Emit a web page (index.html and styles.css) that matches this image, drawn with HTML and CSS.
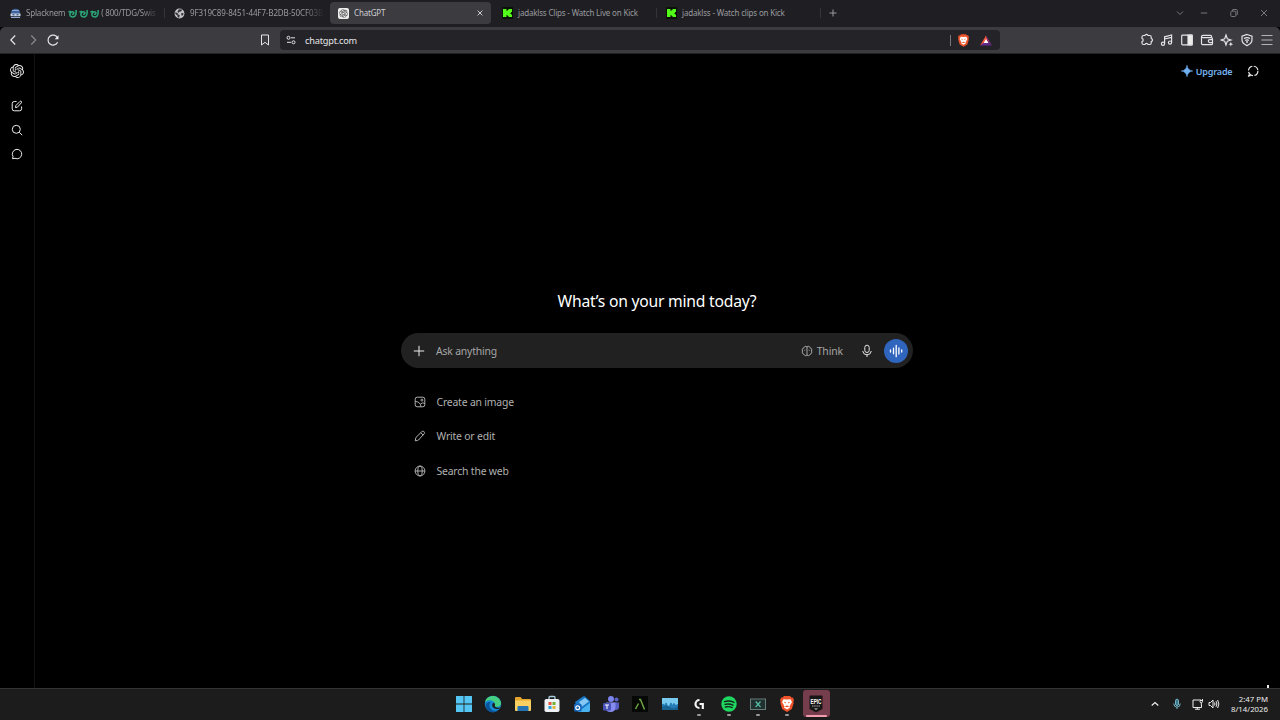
FILE: index.html
```html
<!DOCTYPE html>
<html lang="en">
<head>
    <meta charset="UTF-8">
    <title>ChatGPT</title>
    <link rel="stylesheet" href="styles.css">
</head>
<body>
    <svg class="defs" width="0" height="0">
        <symbol id="knot" viewBox="0 0 24 24"><path fill="currentColor" d="M22.2819 9.8211a5.9847 5.9847 0 0 0-.5157-4.9108 6.0462 6.0462 0 0 0-6.5098-2.9A6.0651 6.0651 0 0 0 4.9807 4.1818a5.9847 5.9847 0 0 0-3.9977 2.9 6.0462 6.0462 0 0 0 .7427 7.0966 5.98 5.98 0 0 0 .511 4.9107 6.051 6.051 0 0 0 6.5146 2.9001A5.9847 5.9847 0 0 0 13.2599 24a6.0557 6.0557 0 0 0 5.7718-4.2058 5.9894 5.9894 0 0 0 3.9977-2.9001 6.0557 6.0557 0 0 0-.7475-7.0729zm-9.022 12.6081a4.4755 4.4755 0 0 1-2.8764-1.0408l.1419-.0804 4.7783-2.7582a.7948.7948 0 0 0 .3927-.6813v-6.7369l2.02 1.1686a.071.071 0 0 1 .038.0522v5.5826a4.504 4.504 0 0 1-4.4945 4.4944zm-9.6607-4.1254a4.4708 4.4708 0 0 1-.5346-3.0137l.142.0852 4.783 2.7582a.7712.7712 0 0 0 .7806 0l5.8428-3.3685v2.3324a.0804.0804 0 0 1-.0332.0615L9.74 19.9502a4.4992 4.4992 0 0 1-6.1408-1.6464zM2.3408 7.8956a4.485 4.485 0 0 1 2.3655-1.9728V11.6a.7664.7664 0 0 0 .3879.6765l5.8144 3.3543-2.0201 1.1685a.0757.0757 0 0 1-.071 0l-4.8303-2.7865A4.504 4.504 0 0 1 2.3408 7.872zm16.5963 3.8558L13.1038 8.364 15.1192 7.2a.0757.0757 0 0 1 .071 0l4.8303 2.7913a4.4944 4.4944 0 0 1-.6765 8.1042v-5.6772a.79.79 0 0 0-.407-.667zm2.0107-3.0231l-.142-.0852-4.7735-2.7818a.7759.7759 0 0 0-.7854 0L9.409 9.2297V6.8974a.0662.0662 0 0 1 .0284-.0615l4.8303-2.7866a4.4992 4.4992 0 0 1 6.6802 4.66zM8.3065 12.863l-2.02-1.1638a.0804.0804 0 0 1-.038-.0567V6.0742a4.4992 4.4992 0 0 1 7.3757-3.4537l-.142.0805L8.704 5.459a.7948.7948 0 0 0-.3927.6813zm1.0976-2.3654l2.602-1.4998 2.6069 1.4998v2.9994l-2.5974 1.4997-2.6067-1.4997Z"/></symbol>
        <symbol id="kick" viewBox="0 0 11 12"><rect width="11" height="12" fill="#0a1207"/><path fill="#53fc18" d="M1 2h3.500v2h1V3h1V2H10v3H9v1H8v.5h1v1h1V10H6.500V9h-1V8h-1v2H1z"/></symbol>
        <symbol id="brave" viewBox="0 0 14 16"><path fill="#f0532a" d="M4 0h6l1.500 1.500 1.300-.1L14 4l-.6 1.500.3 1.500-1.900 6L7 16l-4.800-3L.3 7l.3-1.500L0 4l1.200-2.600 1.300.1z"/><path fill="#fff" d="M3.500 3.300 7 3.600l3.500-.3L12 6l-1.500 2.500-.9 1.900.4 1.100L7 13.500 4 11.500l.4-1.100-.9-1.900L2 6z"/><path fill="#f0532a" d="m3.800 5.800 2.200.4-.6 1.300zM10.200 5.800 8 6.200l.6 1.300zM4.300 10.300 7 9.600l2.700.7-2.700 1z"/></symbol>
        <symbol id="dragon" viewBox="0 0 10 10"><path fill="none" stroke="#2ba778" stroke-width="1.7" d="M.5 3.500 3 2.500M9 1v3.500C9 8 6.500 9.200 4.200 8.700S1.500 5.500 3 4s4-.8 3.500.8-2 1-2 1"/></symbol>
    </svg>

    <div class="tabs">
        <div class="tab">
            <svg class="favicon" viewBox="0 0 11 11"><ellipse cx="5.5" cy="4.5" rx="4.5" ry="3.8" fill="#40639f"/><path d="M2 2.500h7M1 9.500h9" stroke="#8ba9d6"/><path d="M.5 5.500h10v2.700H.5z" fill="#c4d1e5"/><path d="M2.500 6.800h2M6.500 6.800h2" stroke="#26385e"/></svg>
            <span class="title fade">Splacknem <svg class="emoji"><use href="#dragon"/></svg><svg class="emoji"><use href="#dragon"/></svg><svg class="emoji"><use href="#dragon"/></svg>( 800/TDG/Swis</span>
        </div>
        <div class="tab plain">
            <svg class="favicon" viewBox="0 0 11 11"><circle cx="5.5" cy="5.5" r="4.9" fill="#c4c4c8"/><path fill="#333338" d="M1.200 4.200 3.800 5v1.200l2 1-.6 2.500-1.500-.5-.3-1.600-2-1.500zM5 1.200l3 .3-.5 1.800-2 .4-.9 1.300L3.500 3.500zM7 5.300l2.500-.2-.3 2-1.400 1z"/></svg>
            <span class="title hash fade">9F319C89-8451-44F7-B2DB-50CF03B</span>
        </div>
        <div class="tab active">
            <svg class="favicon gpt" viewBox="0 0 11 11"><rect width="11" height="11" rx="2" fill="#eee"/><use href="#knot" x="1.2" y="1.2" width="8.6" height="8.6"/></svg>
            <span class="title">ChatGPT</span>
            <svg class="close" viewBox="0 0 6 6"><path d="m.6.600 4.800 4.800m0-4.800L.6 5.400"/></svg>
        </div>
        <div class="tab">
            <svg class="favicon kick"><use href="#kick"/></svg>
            <span class="title">jadaklss Clips - Watch Live on Kick</span>
        </div>
        <div class="tab">
            <svg class="favicon kick"><use href="#kick"/></svg>
            <span class="title">jadaklss - Watch clips on Kick</span>
        </div>
        <svg class="new-tab" viewBox="0 0 8 8"><path d="M4 .5v7M.5 4h7"/></svg>
        <div class="window-buttons">
            <svg viewBox="0 0 10 10"><path d="m2 3.500 3 3 3-3"/></svg>
            <svg viewBox="0 0 10 10"><path d="M1.800 5h6.400"/></svg>
            <svg viewBox="0 0 10 10"><rect x="1.8" y="3.2" width="5" height="5.3" rx="1"/><path d="M3.500 3V2q0-.5.5-.5h3.300q1 0 1 1v3.800q0 .7-.8.7"/></svg>
            <svg viewBox="0 0 10 10"><path d="m2 2 6 6m0-6L2 8"/></svg>
        </div>
    </div>

    <div class="toolbar">
        <div class="nav">
            <svg viewBox="0 0 14 14"><path d="M9.200 2.500 4.800 7l4.400 4.500"/></svg>
            <svg class="dim" viewBox="0 0 14 14"><path d="M5.300 2.500 9.700 7l-4.400 4.500"/></svg>
            <svg viewBox="0 0 14 14"><path d="M11.600 9.200A5 5 0 1 1 11.500 4.800"/><path d="M12.500 2.300v4H8.700z" fill="#eee" stroke="none"/></svg>
        </div>
        <svg class="bookmark" viewBox="0 0 12 14"><path d="M2.500 2h7v10L6 9.300 2.500 12z"/></svg>
        <div class="address">
            <svg class="site" viewBox="0 0 10 10"><circle cx="2.5" cy="2.8" r="1.5"/><path d="M5 2.800h4M1 7.300h4"/><circle cx="7.500" cy="7.300" r="1.5"/></svg>
            <span class="url">chatgpt.com</span>
            <span class="bar"></span>
            <svg class="shield"><use href="#brave"/></svg>
            <svg class="bat" viewBox="0 0 12 11"><path d="M6 .5 8 7 0 10.500z" fill="#f0523a"/><path d="M6 .5 12 10.500 8 7z" fill="#8a2d87"/><path d="M0 10.500 4 7.500h4l4 3z" fill="#612a8f"/><path d="m6 4 2.400 4H3.600z" fill="#fff"/></svg>
        </div>
        <div class="extensions">
            <svg viewBox="0 0 14 14"><path d="M3.500 2.500h1.400c.5-1.500 2.700-1.500 3.200 0h1.600q1.500 0 1.500 1.500v1.400c1.700.5 1.700 2.700 0 3.200V10q0 1.500-1.500 1.500H8.100c-.5-1.500-2.700-1.500-3.200 0H3.500Q2 11.500 2 10V8.600c1.600-.5 1.600-2.700 0-3.200V4q0-1.500 1.500-1.500z"/></svg>
            <svg viewBox="0 0 14 14"><circle cx="3" cy="10.8" r="1.6"/><circle cx="10" cy="9.6" r="1.6"/><path d="M4.600 10.800v-7l7-1.800v7.600M4.600 6l7-1.700"/></svg>
            <svg viewBox="0 0 14 14"><rect x="1.7" y="2.2" width="10.6" height="9.6" rx=".8"/><path d="M8 2.200h4v9.600H8z" fill="#eee"/></svg>
            <svg viewBox="0 0 14 14"><path d="M11.500 4.500V3.300q0-1-1-1H3q-1.500 0-1.500 1.200T3 4.700h8.200q1.300 0 1.300 1.200v4.500q0 1.300-1.300 1.300H3.300q-1.800 0-1.800-1.500V3.500M12.500 6.600H9.800a1.500 1.500 0 0 0 0 3h2.700"/></svg>
            <svg viewBox="0 0 14 14"><path d="M6 2 7.300 5.700 11 7 7.300 8.300 6 12 4.700 8.300 1 7l3.700-1.300z"/><path d="m10.800 8.800.7 1.700 1.700.7-1.700.6-.7 1.700-.6-1.700-1.700-.6 1.700-.7z" fill="#eee" stroke="none"/></svg>
            <svg viewBox="0 0 14 14"><path d="m7 1.500 5 1.700v3.600Q12 10.500 7 12.600 2 10.500 2 6.800V3.200z"/><path d="M4 5.600q3-2 6 0M5.200 7.400q1.800-1.200 3.600 0"/><circle cx="7" cy="9" r=".4"/></svg>
            <svg class="menu" viewBox="0 0 14 14"><path d="M1.500 2.500h11M1.500 7h11M1.500 11.500h11"/></svg>
        </div>
    </div>

    <div class="page">
        <div class="sidebar">
            <svg class="logo"><use href="#knot"/></svg>
            <svg class="item" viewBox="0 0 12 12"><path d="M5.500 1.500H3.300Q1.200 1.500 1.200 3.600v5.200q0 2 2.100 2h5.200q2.100 0 2.100-2V6.500M4.500 7.600l.3-2L9 1.400q.7-.6 1.300 0t0 1.500L6.400 7.200z"/></svg>
            <svg class="item" viewBox="0 0 12 12"><circle cx="5.3" cy="5.3" r="4"/><path d="m8.300 8.300 2.900 2.900"/></svg>
            <svg class="item" viewBox="0 0 12 12"><path d="M1.500 10.700 2 8.500A4.700 4.700 0 1 1 4 10.300z"/></svg>
        </div>
        <div class="main">
            <div class="header">
                <svg class="spark" viewBox="0 0 12 12"><path d="M6 .2Q6.700 5.300 11.800 6 6.700 6.700 6 11.800 5.300 6.700.2 6 5.300 5.300 6 .2z" stroke="#6fb0f3"/></svg>
                <span class="upgrade">Upgrade</span>
                <svg class="temp" viewBox="0 0 12 12"><path d="M2.200 9.500 1.700 11l2-.6" /><circle cx="6.2" cy="5.9" r="4.7" stroke-dasharray="5.9 1.5"/></svg>
            </div>
            <div class="content">
                <h1>What’s on your mind today?</h1>
                <div class="composer">
                    <svg class="plus" viewBox="0 0 12 12"><path d="M6 .8v10.400M.8 6h10.400"/></svg>
                    <span class="placeholder">Ask anything</span>
                    <svg class="brain" viewBox="0 0 12 12"><path d="M6 1.700v8.600M6 2C4.800.7 3.200 1.300 3 2.700 1.300 3.200.8 4.600 1.500 6 .8 7.500 1.500 9 3 9.300 3.400 10.800 5 11.200 6 10c1 1.200 2.600.8 3-.7 1.500-.3 2.200-1.800 1.500-3.300.7-1.400.2-2.800-1.500-3.300C8.800 1.300 7.200.7 6 2zM3.900 4.700l-.3 1M8.100 4.700l.3 1"/></svg>
                    <span class="think">Think</span>
                    <svg class="mic" viewBox="0 0 12 14"><rect x="3.8" y="1.2" width="4.4" height="7.3" rx="2.2"/><path d="M1.700 7q.5 3.800 4.300 3.800T10.300 7M6 10.800v2.200"/></svg>
                    <div class="voice"><svg viewBox="0 0 14 14"><path d="M1.500 6v2M4.500 4.200v5.600M7.200 1.300v11.400M9.900 4v6M12.700 6v2"/></svg></div>
                </div>
                <div class="suggestion">
                    <svg viewBox="0 0 12 12"><rect x="1.2" y="1.2" width="9.6" height="9.6" rx="2"/><circle cx="7.9" cy="4.1" r="1"/><path d="M1.300 5.500q5 0 5.700 5.200M6.500 8q2-2 4.200-.6"/></svg>
                    <span>Create an image</span>
                </div>
                <div class="suggestion">
                    <svg viewBox="0 0 12 12"><path d="m1.200 10.800.7-3.300 5.900-5.800q1-1 2-.3t.5 2.200L4.500 10q-.8.600-3.300.8zM6.800 2.700l2.500 2.500"/></svg>
                    <span>Write or edit</span>
                </div>
                <div class="suggestion">
                    <svg viewBox="0 0 12 12"><circle cx="6" cy="6" r="4.9"/><ellipse cx="6" cy="6" rx="2.2" ry="4.9"/><path d="M1.100 6h9.800"/></svg>
                    <span>Search the web</span>
                </div>
            </div>
            <span class="speck"></span>
        </div>
    </div>

    <div class="taskbar">
        <div class="apps">
            <div class="app"><svg viewBox="0 0 18 18"><path fill="#55c5f3" d="M1 1h7.600v7.600H1zM9.400 1H17v7.600H9.400zM1 9.400h7.600V17H1zM9.400 9.400H17V17H9.400z"/></svg></div>
            <div class="app"><svg viewBox="0 0 18 18"><circle cx="9" cy="9" r="8.2" fill="#168bd3"/><path fill="#45cf80" d="M1 7C2.500-1 15-1.500 17 7.500c.5 3-1.700 4.700-5 4.300-2-.2-1.500-1-1-2C11 5 4.500 4 1 7z"/><path fill="#0b559c" d="M6 8c-2 5 2.500 9 8 7.300C8.500 20 1.500 16 1.700 10 2 7.500 4.500 6.500 7 7z"/><path fill="#1d2020" d="M9.500 7.700c3 1.300.3 3 2 4.300 1.500 1.200 3.800.8 5 .2-2 3-7 2-8-.7-.7-2-.3-3 1-3.800z"/></svg></div>
            <div class="app"><svg viewBox="0 0 18 18"><path d="M1 3q0-1 1-1h4.500l1.700 2H16q1 0 1 1v4H1z" fill="#e6a52d"/><path d="M1 5.500h16V15q0 1-1 1H2q-1 0-1-1z" fill="#f8cf60"/><path d="M4.500 11h9q1 0 1 1v4h-11v-4q0-1 1-1z" fill="#2474b5"/></svg></div>
            <div class="app"><svg viewBox="0 0 18 18"><path d="M6 5V2.500q0-1 1-1h4q1 0 1 1V5" fill="none" stroke="#a8cddd" stroke-width="1.3"/><rect x="1.5" y="4" width="15" height="13" rx="1.8" fill="#eff2f4"/><path d="M5.500 7h3v3h-3z" fill="#e75435"/><path d="M9.500 7h3v3h-3z" fill="#72af32"/><path d="M5.500 11h3v3h-3z" fill="#2ca0db"/><path d="M9.500 11h3v3h-3z" fill="#e3b33c"/></svg></div>
            <div class="app"><svg viewBox="0 0 18 18"><path d="m2 7 8-5.500q1-.5 2 0L17 6v9q0 2-2 2H5z" fill="#1979c8"/><path d="m6 7 6-4 4 3.500-7 5z" fill="#86c8f3"/><path d="m5 17 12-9v7q0 2-2 2z" fill="#49b2ef"/><rect x="1" y="9" width="7.5" height="7.5" rx="1" fill="#1465b8"/><circle cx="4.7" cy="12.7" r="1.9" fill="none" stroke="#fff" stroke-width="1.2"/></svg></div>
            <div class="app"><svg viewBox="0 0 18 18"><circle cx="9" cy="4" r="3" fill="#7b83ed"/><circle cx="14.5" cy="4.5" r="2" fill="#5a62c3"/><path d="M11 7.500h6V12q0 3-3 3h-3z" fill="#575ec2"/><path d="M4 7.500h9.500V12q0 5-5 5T4 13z" fill="#868cef"/><rect x="1" y="8" width="8" height="7.5" rx="1" fill="#4851b6"/><path d="M3 10h4M5 10v4" stroke="#fff"/></svg></div>
            <div class="app"><svg viewBox="0 0 18 18"><rect x="1" y="1" width="16" height="16" fill="#050805"/><path d="m4.500 14 3-5.500M8 4.500h1.500l4 10" stroke="#6ea642" stroke-width="1.5" fill="none"/></svg></div>
            <div class="app"><svg viewBox="0 0 18 18"><rect x="1" y="3" width="16" height="12" fill="#78caee"/><path d="M1 9q1.500-1 2.500 1 1.500-5 3 0 1 2 2 0 1.500-5 3 0 1.500-4 3 0L17 9v6H1z" fill="#247db5"/><path d="M1 12q4-3 8 0t8-1v4H1z" fill="#176394"/></svg></div>
            <div class="app running"><svg viewBox="0 0 18 18"><path d="M9.500 5A4 4 0 1 0 9.500 13M9.500 9h3.300v5" stroke="#f5f5f5" stroke-width="2.2" fill="none"/></svg></div>
            <div class="app running"><svg viewBox="0 0 18 18"><circle cx="9" cy="9" r="7.7" fill="#1ed760"/><path d="M4.500 6.600q5-1.500 9.500.8M5 9.400q4.200-1.200 8 .8M5.400 12q3.500-1 6.800.6" stroke="#14251a" stroke-width="1.4" stroke-linecap="round" fill="none"/></svg></div>
            <div class="app running"><svg viewBox="0 0 18 18"><rect x="1.5" y="4" width="15" height="10.5" fill="#20302e" stroke="#667d79"/><path d="m6.700 6.500 4.800 5.500m0-5.500L6.700 12" stroke="#55bca4" stroke-width="1.2"/></svg></div>
            <div class="app running"><svg viewBox="-2 -1 18 18"><use href="#brave" width="14" height="16"/></svg></div>
            <div class="app current"><svg viewBox="0 0 18 18"><path d="M2.500 1.500q0-1 1-1h11q1 0 1 1V14L9 17.500 2.500 14z" fill="#171717"/><text x="9" y="8.800" class="epic" textLength="11" lengthAdjust="spacingAndGlyphs">EPIC</text><path d="M5 11h8" stroke="#aaa" stroke-dasharray="1.5 .7"/><path d="M7 13.600h4L9 14.800z" fill="#ddd"/></svg></div>
        </div>
        <div class="tray">
            <svg class="up" viewBox="0 0 10 10"><path d="m1.700 6.500 3.300-3 3.300 3"/></svg>
            <svg class="tray-mic" viewBox="0 0 10 12"><rect x="3.5" y="1.2" width="3" height="6.3" rx="1.5" fill="#38768a"/><path d="M1.700 5.500q.2 3.700 3.300 3.700t3.300-3.700M5 9.200V11"/></svg>
            <svg class="network" viewBox="0 0 12 12"><path d="M7 2H1v7.500h8.500V7M3 11.200h5M5.300 9.500v1.700M8 1v2.700q0 1 1.200 1t1.300-1V1M8 2.500h2.500M9.300 5v2"/></svg>
            <svg class="sound" viewBox="0 0 12 12"><path d="M1 4.500h1.500L5 2v8L2.500 7.500H1zM6.500 4.500q1 1.500 0 3M8 3.200q1.800 2.800 0 5.600M9.600 2q2.600 4 0 8"/></svg>
            <div class="clock">2:47 PM<br><span>8/14/2026</span></div>
        </div>
    </div>
</body>
</html>
```
FILE: styles.css
```css
* {
    box-sizing: border-box;
    margin: 0;
    padding: 0;
}

body {
    width: 1280px;
    height: 720px;
    display: flex;
    flex-direction: column;
    overflow: hidden;
    background: #000;
    color: #ececec;
    font-family: "Noto Sans", "Open Sans", sans-serif;
}

svg {
    display: block;
    flex: none;
    fill: none;
    stroke: currentColor;
}

use {
    stroke: none;
}

.defs {
    display: none;
}

/* tab strip */
.tabs {
    height: 27px;
    flex: none;
    display: flex;
    align-items: center;
    padding: 0 0 1px 2px;
    background: #1f1f23;
    color: #9a9a9f;
}

.tab {
    width: 164px;
    height: 22px;
    flex: none;
    display: flex;
    align-items: center;
    padding-left: 8px;
    background: linear-gradient(#34343a, #34343a) right 1px center / 1px 10px no-repeat;
}

.plain {
    background: none;
}

.tab.active {
    width: 161px;
    margin-right: 3px;
    border-radius: 4px;
    background: #3b3b40;
    color: #cfcfd3;
}

.favicon {
    width: 11px;
    height: 11px;
    margin-right: 5px;
    stroke: none;
}

.gpt {
    color: #333;
}

.kick {
    height: 12px;
}

.title {
    height: 14px;
    line-height: 14px;
    font-size: 8px;
    letter-spacing: -.18px;
    white-space: nowrap;
}

.hash {
    letter-spacing: -.12px;
}

.fade {
    width: 134px;
    mask-image: linear-gradient(90deg, #000 86%, transparent);
}

.emoji {
    display: inline-block;
    width: 9px;
    height: 9px;
    margin: 0 2px 0 0;
    vertical-align: -2px;
}

.emoji:first-child {
    margin-left: 1px;
}

.close {
    width: 6px;
    height: 6px;
    margin-left: auto;
    margin-right: 8px;
}

.new-tab {
    width: 8px;
    height: 8px;
    margin-left: 7px;
}

.window-buttons {
    display: flex;
    margin-left: auto;
    padding-right: 11px;
    color: #77777c;
}

.window-buttons svg {
    width: 10px;
    height: 10px;
    margin-left: 20px;
}

.window-buttons svg:nth-child(2) {
    margin-left: 14px;
}

/* toolbar */
.toolbar {
    height: 27px;
    flex: none;
    display: flex;
    align-items: center;
    background: #3b3b40;
    border-bottom: 1px solid #222225;
    border-radius: 5px 5px 0 0;
    color: #e4e4e7;
}

.nav {
    display: flex;
    gap: 6px;
    margin-left: 6px;
}

.nav svg,
.extensions svg {
    width: 14px;
    height: 14px;
    stroke-width: 1.2;
}

.nav .dim {
    color: #88888d;
}

.extensions .menu {
    color: #b4b4b8;
}

.bookmark {
    width: 12px;
    height: 14px;
    margin-left: 198.5px;
}

.address {
    width: 720px;
    height: 20px;
    display: flex;
    align-items: center;
    margin-left: 9.5px;
    padding-left: 6px;
    border-radius: 4px;
    background: #242428;
}

.site {
    width: 10px;
    height: 10px;
}

.url {
    margin-left: 9px;
    font-size: 9.2px;
    letter-spacing: -.2px;
}

.bar {
    width: 1px;
    height: 11px;
    margin-left: auto;
    background: #77777c;
}

.shield {
    width: 11px;
    height: 13px;
    margin-left: 7px;
}

.bat {
    width: 12px;
    height: 11px;
    margin: 0 8px 0 11px;
    stroke: none;
}

.extensions {
    display: flex;
    gap: 6px;
    margin-left: auto;
    padding-right: 6px;
}

/* page */
.page {
    flex: 1;
    display: flex;
}

.sidebar {
    width: 35px;
    display: flex;
    flex-direction: column;
    align-items: center;
    padding-top: 10px;
    border-right: 1px solid #131313;
}

.logo {
    width: 14px;
    height: 14px;
    margin-bottom: 22px;
}

.item {
    width: 12px;
    height: 12px;
    margin-bottom: 12px;
}

.main {
    position: relative;
    flex: 1;
    display: flex;
    flex-direction: column;
}

.header {
    height: 34px;
    display: flex;
    align-items: center;
    justify-content: flex-end;
    padding-right: 21.5px;
}

.spark {
    width: 12px;
    height: 12px;
    fill: #6fb0f3;
    stroke-width: .5;
}

.upgrade {
    margin: 0 14px 0 3px;
    color: #75b2f0;
    font-size: 9px;
    font-weight: 600;
    letter-spacing: -.15px;
}

.temp {
    width: 12px;
    height: 12px;
    stroke-width: 1.2;
}

.content {
    width: 512px;
    margin: 199px 0 0 366px;
}

h1 {
    height: 28px;
    margin-bottom: 18px;
    font-size: 15.7px;
    line-height: 28px;
    font-weight: 400;
    letter-spacing: -.23px;
    text-align: center;
    color: #fff;
    white-space: nowrap;
}

.composer {
    height: 35px;
    display: flex;
    align-items: center;
    margin: 0 0 16.5px;
    padding: 0 5px 0 12px;
    border-radius: 18px;
    background: #212121;
    font-size: 10.4px;
    letter-spacing: -.18px;
    color: #a6a6a6;
}

.plus {
    width: 12px;
    height: 12px;
    color: #eee;
}

.placeholder {
    margin-left: 11px;
}

.brain {
    width: 12px;
    height: 12px;
    margin-left: auto;
}

.think {
    margin-left: 4px;
    letter-spacing: -.1px;
}

.mic {
    width: 12px;
    height: 14px;
    margin-left: 18px;
    color: #e5e5e5;
}

.voice {
    width: 24px;
    height: 24px;
    display: grid;
    place-items: center;
    margin-left: 11px;
    border-radius: 50%;
    background: #2f65bd;
    color: #fff;
}

.voice svg {
    width: 14px;
    height: 14px;
    stroke-width: 1.3;
    stroke-linecap: round;
}

.suggestion {
    height: 34.6px;
    display: flex;
    align-items: center;
    padding-left: 12.5px;
    font-size: 10.4px;
    letter-spacing: -.18px;
    color: #b0b0b0;
}

.suggestion svg {
    width: 12px;
    height: 12px;
    margin-right: 11px;
}

.speck {
    position: absolute;
    right: 11px;
    bottom: 0;
    width: 2px;
    height: 3px;
    background: #eee;
}

/* taskbar */
.taskbar {
    height: 32px;
    flex: none;
    display: flex;
    background: #1c1c1c;
    border-top: 1px solid #343434;
}

.apps {
    display: flex;
    margin-left: 449.3px;
}

.app {
    position: relative;
    width: 29.4px;
    height: 30px;
    display: grid;
    place-items: center;
}

.app svg {
    width: 18px;
    height: 18px;
    stroke: none;
}

.running::after {
    content: "";
    position: absolute;
    left: 12.7px;
    bottom: 3px;
    width: 4px;
    height: 2px;
    border-radius: 1px;
    background: #999;
}

.current {
    width: 27px;
    height: 27px;
    margin: 1px 0 0 1px;
    border-radius: 3px;
    background: #763d4c;
}

.current::after {
    content: "";
    position: absolute;
    left: 3px;
    bottom: 0;
    width: 21px;
    height: 2px;
    border-radius: 1px;
    background: #f29caf;
}

.epic {
    font-family: "Liberation Sans", sans-serif;
    font-size: 7.5px;
    font-weight: 700;
    text-anchor: middle;
    fill: #fff;
}

.tray {
    display: flex;
    align-items: center;
    margin-left: auto;
    padding: 0 12px 1px 0;
}

.up {
    width: 10px;
    height: 10px;
    margin-right: 12px;
    stroke-width: 1.2;
}

.tray-mic {
    width: 10px;
    height: 12px;
    margin-right: 10px;
    color: #75b4c5;
}

.network,
.sound {
    width: 12px;
    height: 12px;
    margin-right: 4px;
}

.clock {
    width: 44px;
    font-size: 7.8px;
    line-height: 10.5px;
    text-align: right;
    white-space: nowrap;
}
```
